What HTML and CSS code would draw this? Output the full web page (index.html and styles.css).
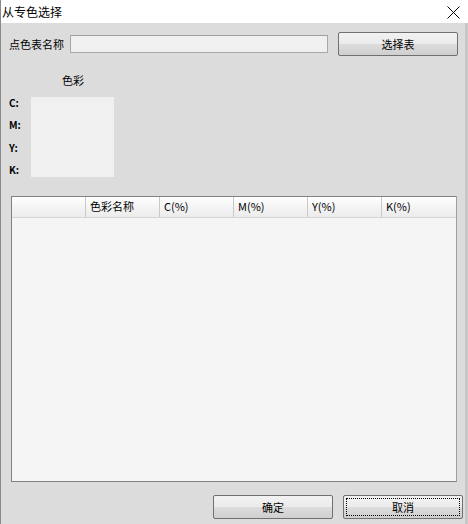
FILE: index.html
```html
<!DOCTYPE html>
<html lang="zh-CN">
<head>
    <meta charset="utf-8"/>
    <title>从专色选择</title>
    <link rel="stylesheet" href="styles.css">
</head>
<body>
<div class="window">
    <div class="titlebar">
        <span class="title">从专色选择</span>
        <svg class="close" width="13" height="13" viewBox="0 0 13 13">
            <path d="M0.5 0.5 L12.5 12.5 M12.5 0.5 L0.5 12.5" stroke="#000" stroke-width="1" fill="none"/>
        </svg>
    </div>
    <div class="content">
        <div class="row-name">
            <span class="label">点色表名称</span>
            <div class="input"></div>
            <button class="btn btn-pick">选择表</button>
        </div>
        <div class="color-title">色彩</div>
        <div class="color-area">
            <div class="cmyk">
                <span>C:</span>
                <span>M:</span>
                <span>Y:</span>
                <span>K:</span>
            </div>
            <div class="swatch"></div>
        </div>
        <div class="table">
            <div class="thead">
                <div class="th"></div>
                <div class="th">色彩名称</div>
                <div class="th">C(%)</div>
                <div class="th">M(%)</div>
                <div class="th">Y(%)</div>
                <div class="th">K(%)</div>
            </div>
            <div class="tbody"></div>
        </div>
        <div class="actions">
            <button class="btn">确定</button>
            <button class="btn btn-focus"><span class="focus">取消</span></button>
        </div>
    </div>
</div>
</body>
</html>
```

FILE: styles.css
```css
* {
    box-sizing: border-box;
    font-family: "Noto Sans CJK SC", "Liberation Sans", sans-serif;
}
body {
    margin: 0;
    background: #dcdcdc;
}
.window {
    width: 468px;
    height: 524px;
    display: flex;
    flex-direction: column;
    border-left: 1px solid #8a8a8a;
}
.titlebar {
    flex-shrink: 0;
    height: 23px;
    background: #fff;
    display: flex;
    align-items: center;
    justify-content: space-between;
    padding: 1px 8px 0 1px;
}
.title {
    font-size: 12px;
    color: #000;
    line-height: 1;
}
.content {
    flex: 1;
    background: #dcdcdc;
    padding: 9px 0 0 8px;
    border-right: 3px solid #c8c8c8;
    font-size: 11px;
    color: #000;
}
.row-name {
    display: flex;
    align-items: center;
    height: 24px;
}
.label {
    width: 61px;
}
.input {
    width: 258px;
    height: 18px;
    background: #f0f0f0;
    border: 1px solid #a8a8a8;
    border-top-color: #a0a0a0;
}
.btn {
    width: 120px;
    height: 24px;
    font-size: 11px;
    color: #000;
    border: 1px solid #707070;
    border-radius: 2px;
    background: linear-gradient(#f2f2f2, #ebebeb 50%, #dddddd 50%, #cfcfcf);
    padding: 0;
}
.btn-pick {
    margin-left: 10px;
}
.color-title {
    margin: 17px 0 0 53px;
    height: 14px;
    line-height: 14px;
}
.color-area {
    display: flex;
    height: 80px;
    margin-top: 10px;
}
.cmyk {
    width: 22px;
    display: flex;
    flex-direction: column;
    padding-top: 0;
}
.cmyk span {
    flex-shrink: 0;
    height: 22.4px;
    line-height: 12px;
    font-weight: bold;
    font-size: 10px;
}
.swatch {
    width: 83px;
    height: 80px;
    background: #f0f0f0;
}
.table {
    margin: 19px 0 0 2px;
    width: 446px;
    height: 286px;
    border: 1px solid #828282;
    border-right-color: #a0a0a0;
    display: flex;
    flex-direction: column;
    background: #f5f5f5;
}
.thead {
    display: flex;
    height: 21px;
    background: linear-gradient(#ffffff, #f4f4f4 50%, #ececec);
    border-bottom: 1px solid #d5d5d5;
}
.th {
    width: 74px;
    border-right: 1px solid #c8c8c8;
    padding: 3px 0 0 4px;
    line-height: 13px;
}
.th:last-child {
    border-right: none;
    flex: 1;
}
.tbody {
    flex: 1;
}
.actions {
    display: flex;
    gap: 10px;
    margin: 13px 0 0 204px;
}
.btn-focus {
    padding: 2px;
}
.focus {
    display: flex;
    align-items: center;
    justify-content: center;
    width: 100%;
    height: 100%;
    border: 1px dotted #000;
}
```
